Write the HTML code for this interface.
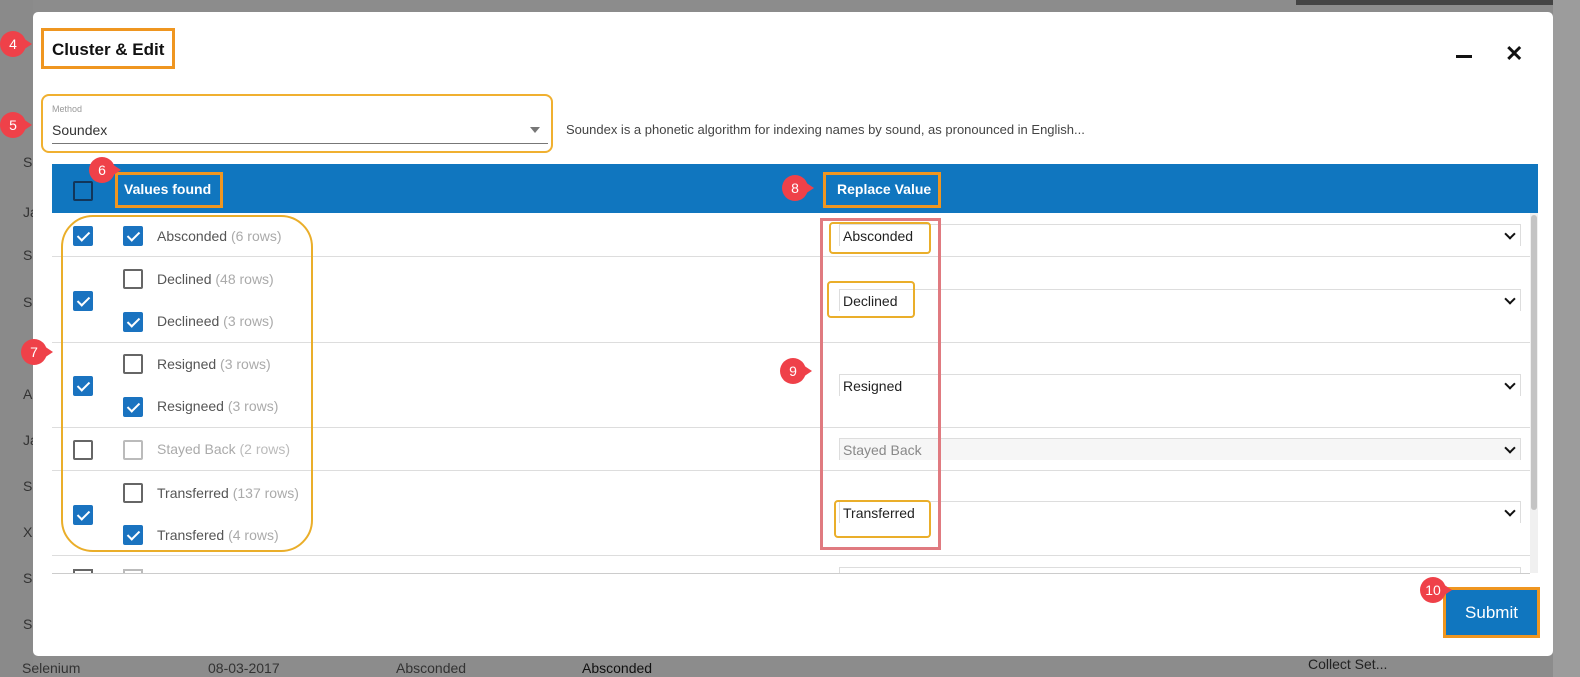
<!DOCTYPE html>
<html><head><style>
*{margin:0;padding:0;box-sizing:border-box}
body{width:1580px;height:677px;overflow:hidden;background:#8c8c8c;font-family:"Liberation Sans",sans-serif;position:relative}
.a{position:absolute}
.m{position:absolute;left:33px;top:12px;width:1520px;height:644px;background:#fff;border-radius:5px}
.t{font-size:14px;color:#555}
.g{color:#aaa}
.cb{position:absolute;width:20px;height:20px;border:2px solid #666;border-radius:2px;background:#fff}
.cb.on{background:#1a73c0;border-color:#1a73c0}
.cb.on::after{content:"";position:absolute;left:5px;top:1px;width:5px;height:10px;border:solid #fff;border-width:0 2px 2px 0;transform:rotate(45deg)}
.cb.dis{border-color:#bbb}
.sep{position:absolute;left:52px;width:1478px;height:1px;background:#ddd}
.sel{position:absolute;left:839px;width:682px;height:22px;border-top:1px solid #ddd;border-right:1px solid #ddd;border-left:1px solid #ddd;font-size:14px;color:#222;padding:3px 0 0 3px}
.sel::after{content:"";position:absolute;right:6px;top:5px;width:6px;height:6px;border:solid #111;border-width:0 2px 2px 0;transform:rotate(45deg)}
.mk{position:absolute;width:26px;height:26px;border-radius:50%;background:#ef4149;color:#fff;font-size:14px;text-align:center;line-height:26px}
.mk::after{content:"";position:absolute;right:-6px;top:7px;border-left:9px solid #ef4149;border-top:6px solid transparent;border-bottom:6px solid transparent}
.ob{position:absolute;border:3px solid #ef9620}
.yb{position:absolute;border:2px solid #eaae2a;border-radius:4px}
</style></head><body>
<div class="a" style="left:0;top:0;width:33px;height:677px;background:#8a8a8a"></div>
<div class="a" style="left:1296px;top:0;width:284px;height:5px;background:#444"></div>
<div class="a" style="left:1553px;top:0;width:27px;height:677px;background:#9c9c9c"></div>
<div class="a t" style="left:23px;top:154px;color:#333">S</div>
<div class="a t" style="left:23px;top:204px;color:#333">Ja</div>
<div class="a t" style="left:23px;top:247px;color:#333">S</div>
<div class="a t" style="left:23px;top:294px;color:#333">S</div>
<div class="a t" style="left:23px;top:386px;color:#333">A</div>
<div class="a t" style="left:23px;top:432px;color:#333">Ja</div>
<div class="a t" style="left:23px;top:478px;color:#333">S</div>
<div class="a t" style="left:23px;top:524px;color:#333">X</div>
<div class="a t" style="left:23px;top:570px;color:#333">S</div>
<div class="a t" style="left:23px;top:616px;color:#333">S</div>
<div class="a t" style="left:22px;top:660px;color:#333">Selenium</div>
<div class="a t" style="left:208px;top:660px;color:#333">08-03-2017</div>
<div class="a t" style="left:396px;top:660px;color:#333">Absconded</div>
<div class="a t" style="left:582px;top:660px;color:#111">Absconded</div>
<div class="a t" style="left:1308px;top:656px;color:#222">Collect Set...</div>

<div class="m"></div>
<div class="a" style="left:52px;top:40px;font-size:17px;font-weight:bold;color:#111">Cluster &amp; Edit</div>
<div class="a" style="left:1456px;top:55px;width:16px;height:3px;background:#111"></div>
<div class="a" style="left:1505px;top:41px;font-size:22px;font-weight:bold;color:#111">✕</div>

<div class="a" style="left:52px;top:104px;font-size:9px;color:#999">Method</div>
<div class="a" style="left:52px;top:122px;font-size:14px;color:#333">Soundex</div>
<div class="a" style="left:52px;top:143px;width:496px;height:1px;background:#777"></div>
<div class="a" style="left:530px;top:127px;border-top:6px solid #777;border-left:5px solid transparent;border-right:5px solid transparent"></div>
<div class="a" style="left:566px;top:122px;font-size:13px;color:#444">Soundex is a phonetic algorithm for indexing names by sound, as pronounced in English...</div>

<div class="a" style="left:52px;top:164px;width:1486px;height:49px;background:#1076bf"></div>
<div class="cb" style="left:73px;top:181px;background:transparent;border-color:#12365a"></div>
<div class="a" style="left:124px;top:181px;font-size:14px;font-weight:bold;color:#fff">Values found</div>
<div class="a" style="left:837px;top:181px;font-size:14px;font-weight:bold;color:#fff">Replace Value</div>

<div class="a" style="left:1530px;top:213px;width:8px;height:360px;background:#f0f0f0"></div>
<div class="a" style="left:1531px;top:215px;width:6px;height:295px;background:#c4c4c4;border-radius:3px"></div>

<div class="sep" style="top:256px"></div>
<div class="sep" style="top:342px"></div>
<div class="sep" style="top:427px"></div>
<div class="sep" style="top:470px"></div>
<div class="sep" style="top:555px"></div>
<div class="sep" style="top:573px;background:#ccc"></div>

<div class="cb on" style="left:73px;top:226px"></div><div class="cb on" style="left:123px;top:226px"></div>
<div class="a t" style="left:157px;top:228px">Absconded <span class="g">(6 rows)</span></div>
<div class="cb on" style="left:73px;top:291px"></div>
<div class="cb" style="left:123px;top:269px"></div><div class="a t" style="left:157px;top:271px">Declined <span class="g">(48 rows)</span></div>
<div class="cb on" style="left:123px;top:312px"></div><div class="a t" style="left:157px;top:313px">Declineed <span class="g">(3 rows)</span></div>
<div class="cb on" style="left:73px;top:376px"></div>
<div class="cb" style="left:123px;top:354px"></div><div class="a t" style="left:157px;top:356px">Resigned <span class="g">(3 rows)</span></div>
<div class="cb on" style="left:123px;top:397px"></div><div class="a t" style="left:157px;top:398px">Resigneed <span class="g">(3 rows)</span></div>
<div class="cb" style="left:73px;top:440px"></div><div class="cb dis" style="left:123px;top:440px"></div>
<div class="a t" style="left:157px;top:441px;color:#aaa">Stayed Back <span style="color:#bbb">(2 rows)</span></div>
<div class="cb on" style="left:73px;top:505px"></div>
<div class="cb" style="left:123px;top:483px"></div><div class="a t" style="left:157px;top:485px">Transferred <span class="g">(137 rows)</span></div>
<div class="cb on" style="left:123px;top:525px"></div><div class="a t" style="left:157px;top:527px">Transfered <span class="g">(4 rows)</span></div>
<div class="a" style="left:73px;top:569px;width:20px;height:4px;border:2px solid #666;border-bottom:none"></div>
<div class="a" style="left:123px;top:569px;width:20px;height:4px;border:2px solid #bbb;border-bottom:none"></div>

<div class="sel" style="top:224px">Absconded</div>
<div class="sel" style="top:289px">Declined</div>
<div class="sel" style="top:374px">Resigned</div>
<div class="sel" style="top:438px;background:#f6f6f6;color:#888">Stayed Back</div>
<div class="sel" style="top:501px">Transferred</div>
<div class="a" style="left:839px;top:567px;width:682px;height:6px;border:1px solid #ddd;border-bottom:none"></div>

<div class="ob" style="left:41px;top:28px;width:134px;height:41px"></div>
<div class="a" style="left:41px;top:94px;width:512px;height:59px;border:2px solid #f0b030;border-radius:8px"></div>
<div class="ob" style="left:115px;top:172px;width:108px;height:36px"></div>
<div class="ob" style="left:823px;top:172px;width:118px;height:36px"></div>
<div class="a" style="left:61px;top:215px;width:252px;height:337px;border:2px solid #eaae2a;border-radius:32px"></div>
<div class="a" style="left:820px;top:218px;width:121px;height:332px;border:3px solid #e07a80"></div>
<div class="yb" style="left:829px;top:222px;width:102px;height:32px"></div>
<div class="yb" style="left:827px;top:281px;width:88px;height:37px"></div>
<div class="yb" style="left:834px;top:500px;width:97px;height:38px"></div>

<div class="a" style="left:1443px;top:587px;width:97px;height:51px;background:#1076bf;border:3px solid #ef9620;color:#fff;font-size:17px;text-align:center;line-height:45px">Submit</div>

<div class="mk" style="left:0px;top:31px">4</div>
<div class="mk" style="left:0px;top:112px">5</div>
<div class="mk" style="left:89px;top:157px">6</div>
<div class="mk" style="left:21px;top:339px">7</div>
<div class="mk" style="left:782px;top:175px">8</div>
<div class="mk" style="left:780px;top:358px">9</div>
<div class="mk" style="left:1420px;top:577px">10</div>
</body></html>
